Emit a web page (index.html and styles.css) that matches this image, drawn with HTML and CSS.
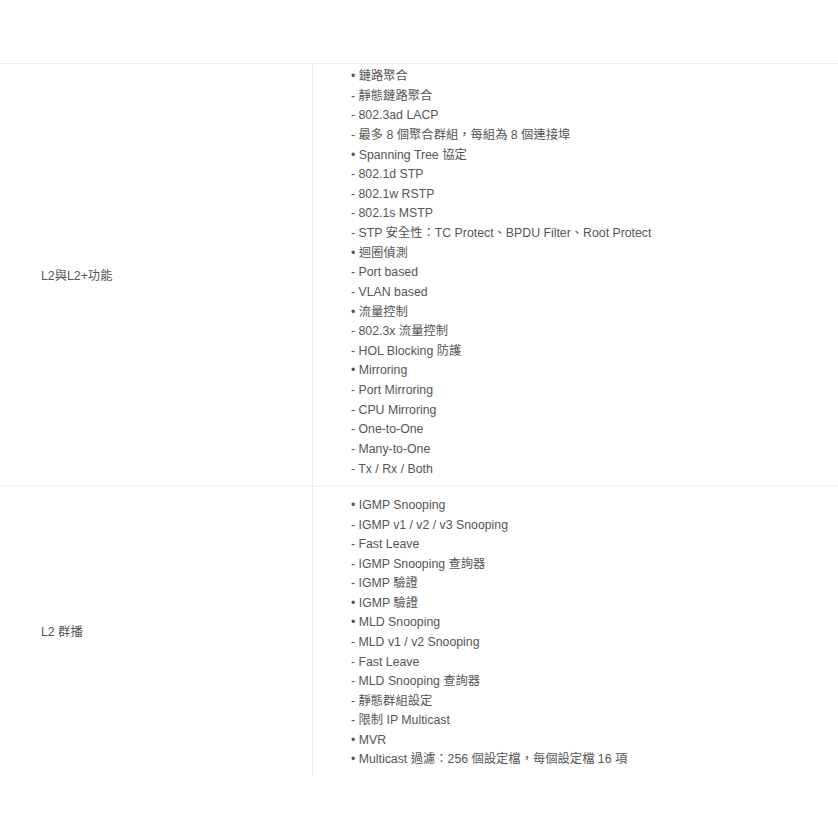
FILE: index.html
```html
<!DOCTYPE html>
<html lang="zh-Hant">
<head>
<meta charset="utf-8">
<link rel="stylesheet" href="styles.css">
</head>
<body>
<table class="spec">
  <tr class="row row-first">
    <td class="label">L2與L2+功能</td>
    <td class="value">
      <div>• 鏈路聚合</div>
      <div>- 靜態鏈路聚合</div>
      <div>- 802.3ad LACP</div>
      <div>- 最多 8 個聚合群組，每組為 8 個連接埠</div>
      <div>• Spanning Tree 協定</div>
      <div>- 802.1d STP</div>
      <div>- 802.1w RSTP</div>
      <div>- 802.1s MSTP</div>
      <div>- STP 安全性：TC Protect、BPDU Filter、Root Protect</div>
      <div>• 迴圈偵測</div>
      <div>- Port based</div>
      <div>- VLAN based</div>
      <div>• 流量控制</div>
      <div>- 802.3x 流量控制</div>
      <div>- HOL Blocking 防護</div>
      <div>• Mirroring</div>
      <div>- Port Mirroring</div>
      <div>- CPU Mirroring</div>
      <div>- One-to-One</div>
      <div>- Many-to-One</div>
      <div>- Tx / Rx / Both</div>
    </td>
  </tr>
  <tr class="row row-second">
    <td class="label">L2 群播</td>
    <td class="value">
      <div>• IGMP Snooping</div>
      <div>- IGMP v1 / v2 / v3 Snooping</div>
      <div>- Fast Leave</div>
      <div>- IGMP Snooping 查詢器</div>
      <div>- IGMP 驗證</div>
      <div>• IGMP 驗證</div>
      <div>• MLD Snooping</div>
      <div>- MLD v1 / v2 Snooping</div>
      <div>- Fast Leave</div>
      <div>- MLD Snooping 查詢器</div>
      <div>- 靜態群組設定</div>
      <div>- 限制 IP Multicast</div>
      <div>• MVR</div>
      <div>• Multicast 過濾：256 個設定檔，每個設定檔 16 項</div>
    </td>
  </tr>
</table>
</body>
</html>
```
FILE: styles.css
```css
html, body {
  margin: 0;
  padding: 0;
  background: #ffffff;
}
body {
  font-family: "Liberation Sans", Arial, "Noto Sans CJK TC", sans-serif;
  font-size: 12.3px;
  color: #555555;
}
.spec {
  margin-top: 63px;
  width: 838px;
  border-collapse: collapse;
  border-top: 1px solid #eeeeee;
}
.row-first {
  border-bottom: 1px solid #eeeeee;
}
.label {
  width: 271px;
  padding: 0 0 0 41px;
  vertical-align: middle;
  border-right: 1px solid #eeeeee;
}
.value {
  padding: 3px 0 7px 38px;
  line-height: 19.63px;
  vertical-align: top;
}
.row-second .value {
  padding-top: 9px;
  padding-bottom: 6px;
  line-height: 19.54px;
}
```
